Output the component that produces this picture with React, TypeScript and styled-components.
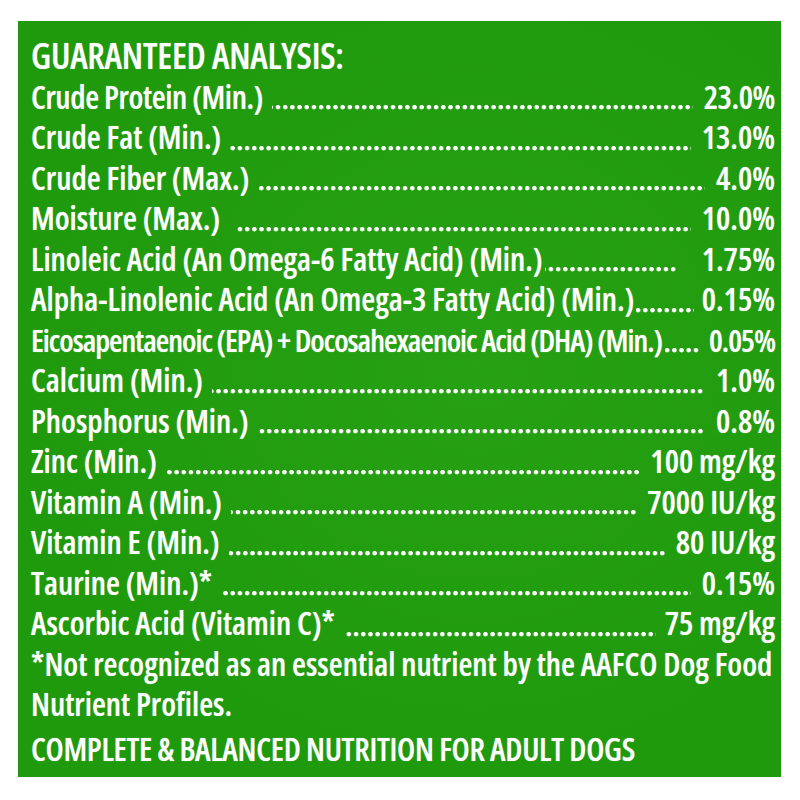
import React from "react";
import styled, { createGlobalStyle } from "styled-components";

const GlobalStyle = createGlobalStyle`
  html, body { margin: 0; padding: 0; background: #ffffff; }
  #root { width: 800px; height: 800px; }
`;

const Page = styled.div`
  width: 800px;
  height: 800px;
  box-sizing: border-box;
  padding: 21px 19px 23px 18px;
  background: #ffffff;
`;

const Panel = styled.section`
  box-sizing: border-box;
  height: 100%;
  padding: 15px 6px 0 13px;
  background:
    radial-gradient(ellipse at 60% 45%, rgba(60, 180, 40, 0.28), rgba(0, 0, 0, 0) 70%),
    #1f9a0c;
  color: #ffffff;
  font-family: "Open Sans", "Liberation Sans", sans-serif;
  font-stretch: 80%;
  text-shadow: 0 0 1px rgba(255, 255, 255, 0.5);
`;

const Heading = styled.h1`
  margin: 0;
  font-size: 36px;
  font-stretch: 75%;
  font-weight: 600;
  line-height: 40.5px;
  letter-spacing: -0.2px;
  white-space: nowrap;
`;

const Row = styled.div<{ $size: number; $stretch: number; $tracking: number }>`
  display: flex;
  align-items: flex-start;
  font-size: ${(p) => p.$size}px;
  font-weight: 600;
  font-stretch: ${(p) => p.$stretch}%;
  letter-spacing: ${(p) => p.$tracking}px;
  line-height: 40.5px;
  white-space: nowrap;
`;

const Label = styled.span`
  flex: none;
`;

const Leader = styled.span<{ $lead: number; $trail: number }>`
  flex: 1 1 auto;
  align-self: stretch;
  min-width: 0;
  margin-left: ${(p) => p.$lead}px;
  margin-right: ${(p) => p.$trail}px;
  background-image: radial-gradient(
    circle at 2.2px 2.2px,
    #ffffff 1.9px,
    rgba(255, 255, 255, 0) 2.6px
  );
  background-size: 7.2px 5px;
  background-repeat: repeat-x;
  background-position: right 0 top 28.5px;
`;

const Value = styled.span`
  flex: none;
`;

const Note = styled.p`
  margin: 0;
  font-size: 32px;
  font-weight: 600;
  line-height: 40.5px;
  white-space: nowrap;
`;

const Footer = styled.p`
  margin: 4px 0 0;
  font-size: 32px;
  font-stretch: 75%;
  font-weight: 600;
  line-height: 40.5px;
  letter-spacing: -0.3px;
  white-space: nowrap;
`;

type Item = {
  label: string;
  value: string;
  lead: number;
  trail: number;
  size?: number;
  stretch?: number;
  tracking?: number;
};

const items: Item[] = [
  { label: "Crude Protein (Min.)", value: "23.0%", lead: 9, trail: 11, tracking: -0.4 },
  { label: "Crude Fat (Min.)", value: "13.0%", lead: 9, trail: 11 },
  { label: "Crude Fiber (Max.)", value: "4.0%", lead: 9, trail: 11 },
  { label: "Moisture (Max.)", value: "10.0%", lead: 15, trail: 11 },
  { label: "Linoleic Acid (An Omega-6 Fatty Acid) (Min.)", value: "1.75%", lead: 2, trail: 24 },
  { label: "Alpha-Linolenic Acid (An Omega-3 Fatty Acid) (Min.)", value: "0.15%", lead: 2, trail: 8 },
  {
    label: "Eicosapentaenoic (EPA) + Docosahexaenoic Acid (DHA) (Min.)",
    value: "0.05%",
    lead: 2,
    trail: 8,
    size: 31,
    stretch: 75,
    tracking: -1,
  },
  { label: "Calcium (Min.)", value: "1.0%", lead: 9, trail: 11 },
  { label: "Phosphorus (Min.)", value: "0.8%", lead: 9, trail: 11 },
  { label: "Zinc (Min.)", value: "100 mg/kg", lead: 9, trail: 9 },
  { label: "Vitamin A (Min.)", value: "7000 IU/kg", lead: 9, trail: 9 },
  { label: "Vitamin E (Min.)", value: "80 IU/kg", lead: 9, trail: 9 },
  { label: "Taurine (Min.)*", value: "0.15%", lead: 9, trail: 11 },
  { label: "Ascorbic Acid (Vitamin C)*", value: "75 mg/kg", lead: 9, trail: 9 },
];

export default function App() {
  return (
    <>
      <GlobalStyle />
      <Page>
        <Panel>
          <Heading>GUARANTEED ANALYSIS:</Heading>
          {items.map((it) => (
            <Row
              key={it.label}
              $size={it.size ?? 32}
              $stretch={it.stretch ?? 80}
              $tracking={it.tracking ?? 0}
            >
              <Label>{it.label}</Label>
              <Leader $lead={it.lead} $trail={it.trail} />
              <Value>{it.value}</Value>
            </Row>
          ))}
          <Note>*Not recognized as an essential nutrient by the AAFCO Dog Food</Note>
          <Note>Nutrient Profiles.</Note>
          <Footer>COMPLETE &amp; BALANCED NUTRITION FOR ADULT DOGS</Footer>
        </Panel>
      </Page>
    </>
  );
}
